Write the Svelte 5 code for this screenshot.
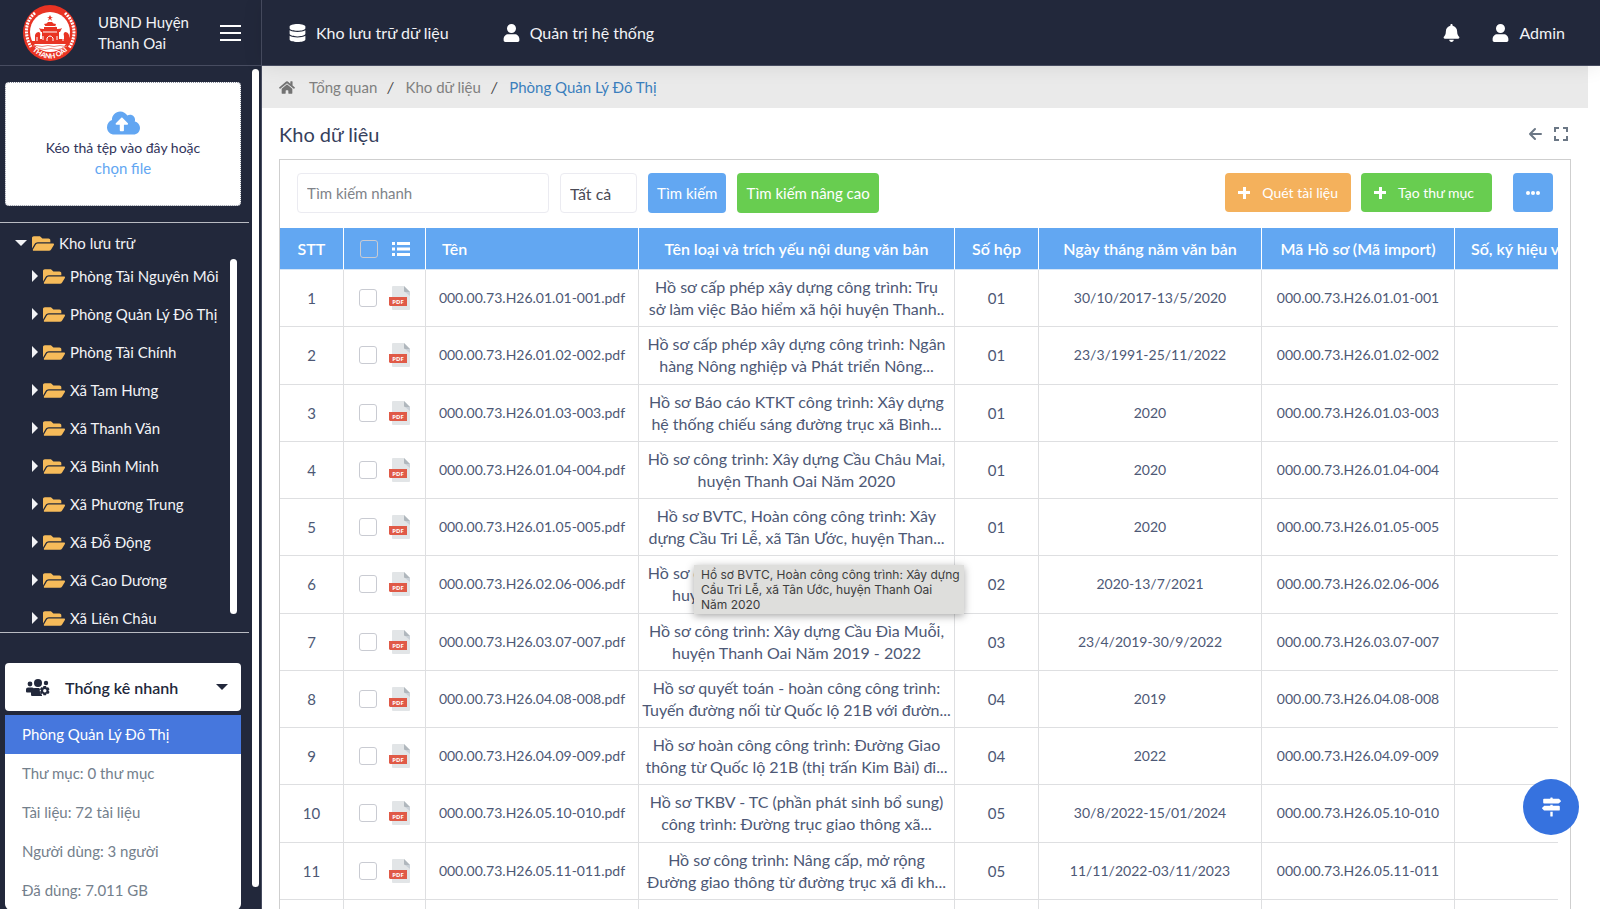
<script lang="ts">
	type Doc = { name: string; lines: [string, string]; box: string; date: string };

	const icons = {
		database:
			'M448 73.143v45.714C448 159.143 347.667 192 224 192S0 159.143 0 118.857V73.143C0 32.857 100.333 0 224 0s224 32.857 224 73.143zM448 176v102.857C448 319.143 347.667 352 224 352S0 319.143 0 278.857V176c48.125 33.143 136.208 48.572 224 48.572S399.874 209.143 448 176zm0 160v102.857C448 479.143 347.667 512 224 512S0 479.143 0 438.857V336c48.125 33.143 136.208 48.572 224 48.572S399.874 369.143 448 336z',
		user: 'M224 256a128 128 0 1 0 0-256 128 128 0 0 0 0 256zm90 32H134C60 288 0 348 0 422v42c0 26 22 48 48 48h352c26 0 48-22 48-48v-42c0-74-60-134-134-134z',
		bell: 'M224 512c35.32 0 63.97-28.65 63.97-64H160.03c0 35.35 28.65 64 63.97 64zm215.39-149.71c-19.32-20.76-55.47-51.99-55.47-154.29 0-77.7-54.48-139.9-127.94-155.16V32c0-17.67-14.32-32-31.98-32s-31.98 14.33-31.98 32v20.84C118.56 68.1 64.08 130.3 64.08 208c0 102.3-36.15 133.53-55.47 154.29-6 6.45-8.66 14.16-8.61 21.71.11 16.4 12.98 32 32.1 32h383.8c19.12 0 32-15.6 32.1-32 .05-7.55-2.61-15.27-8.61-21.71z',
		folder:
			'M572.694 292.093L500.27 416.248A63.997 63.997 0 0 1 444.989 448H45.025c-18.523 0-30.064-20.093-20.731-36.093l72.424-124.155A64 64 0 0 1 152 256h399.964c18.523 0 30.064 20.093 20.73 36.093zM152 224h328v-48c0-26.51-21.49-48-48-48H272l-64-64H48C21.49 64 0 85.49 0 112v278.046l69.077-118.418C86.214 242.25 117.989 224 152 224z',
		upload:
			'M537.6 226.6c4.1-10.7 6.4-22.4 6.4-34.6 0-53-43-96-96-96-19.7 0-38.1 6-53.3 16.2C367 64.2 315.3 32 256 32c-88.4 0-160 71.6-160 160 0 2.7.1 5.4.2 8.1C40.2 219.8 0 273.2 0 336c0 79.5 64.5 144 144 144h368c70.7 0 128-57.3 128-128 0-61.9-44-113.6-102.4-125.4zM393.4 288H328v112c0 8.8-7.2 16-16 16h-48c-8.8 0-16-7.2-16-16V288h-65.4c-14.3 0-21.4-17.2-11.3-27.3l105.4-105.4c6.2-6.2 16.4-6.2 22.6 0l105.4 105.4c10.1 10.1 2.9 27.3-11.3 27.3z',
		home: 'M280.37 148.26L96 300.11V464a16 16 0 0 0 16 16l112.06-.29a16 16 0 0 0 15.92-16V368a16 16 0 0 1 16-16h64a16 16 0 0 1 16 16v95.64a16 16 0 0 0 16 16.05L464 480a16 16 0 0 0 16-16V300L295.67 148.26a12.19 12.19 0 0 0-15.3 0zM571.6 251.47L488 182.56V44.05a12 12 0 0 0-12-12h-56a12 12 0 0 0-12 12v72.61L318.47 43a48 48 0 0 0-61 0L4.34 251.47a12 12 0 0 0-1.6 16.9l25.5 31A12 12 0 0 0 45.15 301l235.22-193.74a12.19 12.19 0 0 1 15.3 0L530.9 301a12 12 0 0 0 16.9-1.6l25.5-31a12 12 0 0 0-1.7-16.93z',
		signs: 'M507.31 84.69L464 41.37c-6-6-14.14-9.37-22.63-9.37H288V16c0-8.84-7.16-16-16-16h-32c-8.84 0-16 7.16-16 16v16H56c-13.25 0-24 10.75-24 24v80c0 13.25 10.75 24 24 24h385.37c8.49 0 16.62-3.37 22.63-9.37l43.31-43.31c6.25-6.26 6.25-16.38 0-22.63zM224 496c0 8.84 7.16 16 16 16h32c8.84 0 16-7.16 16-16V384h-64v112zm232-272H288v-32h-64v32H70.63c-8.49 0-16.62 3.37-22.63 9.37L4.69 276.69c-6.25 6.25-6.25 16.38 0 22.63L48 342.63c6 6 14.14 9.37 22.63 9.37H456c13.25 0 24-10.75 24-24v-80c0-13.25-10.75-24-24-24z'
	};

	const folders = [
		'Phòng Tài Nguyên Môi',
		'Phòng Quản Lý Đô Thị',
		'Phòng Tài Chính',
		'Xã Tam Hưng',
		'Xã Thanh Văn',
		'Xã Bình Minh',
		'Xã Phương Trung',
		'Xã Đỗ Động',
		'Xã Cao Dương',
		'Xã Liên Châu'
	];

	const stats = ['Thư mục: 0 thư mục', 'Tài liệu: 72 tài liệu', 'Người dùng: 3 người', 'Đã dùng: 7.011 GB'];

	const docs: Doc[] = [
		{ name: '000.00.73.H26.01.01-001', lines: ['Hồ sơ cấp phép xây dựng công trình: Trụ', 'sở làm việc Bảo hiểm xã hội huyện Thanh..'], box: '01', date: '30/10/2017-13/5/2020' },
		{ name: '000.00.73.H26.01.02-002', lines: ['Hồ sơ cấp phép xây dựng công trình: Ngân', 'hàng Nông nghiệp và Phát triển Nông...'], box: '01', date: '23/3/1991-25/11/2022' },
		{ name: '000.00.73.H26.01.03-003', lines: ['Hồ sơ Báo cáo KTKT công trình: Xây dựng', 'hệ thống chiếu sáng đường trục xã Bình...'], box: '01', date: '2020' },
		{ name: '000.00.73.H26.01.04-004', lines: ['Hồ sơ công trình: Xây dựng Cầu Châu Mai,', 'huyện Thanh Oai Năm 2020'], box: '01', date: '2020' },
		{ name: '000.00.73.H26.01.05-005', lines: ['Hồ sơ BVTC, Hoàn công công trình: Xây', 'dựng Cầu Tri Lễ, xã Tân Ước, huyện Than...'], box: '01', date: '2020' },
		{ name: '000.00.73.H26.02.06-006', lines: ['Hồ sơ công trình: Xây dựng Cầu Châu Mai,', 'huyện Thanh Oai Năm 2020 - 2021'], box: '02', date: '2020-13/7/2021' },
		{ name: '000.00.73.H26.03.07-007', lines: ['Hồ sơ công trình: Xây dựng Cầu Đìa Muỗi,', 'huyện Thanh Oai Năm 2019 - 2022'], box: '03', date: '23/4/2019-30/9/2022' },
		{ name: '000.00.73.H26.04.08-008', lines: ['Hồ sơ quyết toán - hoàn công công trình:', 'Tuyến đường nối từ Quốc lộ 21B với đườn...'], box: '04', date: '2019' },
		{ name: '000.00.73.H26.04.09-009', lines: ['Hồ sơ hoàn công công trình: Đường Giao', 'thông từ Quốc lộ 21B (thị trấn Kim Bài) đi...'], box: '04', date: '2022' },
		{ name: '000.00.73.H26.05.10-010', lines: ['Hồ sơ TKBV - TC (phần phát sinh bổ sung)', 'công trình: Đường trục giao thông xã...'], box: '05', date: '30/8/2022-15/01/2024' },
		{ name: '000.00.73.H26.05.11-011', lines: ['Hồ sơ công trình: Nâng cấp, mở rộng', 'Đường giao thông từ đường trục xã đi kh...'], box: '05', date: '11/11/2022-03/11/2023' }
	];
</script>

{#snippet icon(name: keyof typeof icons, box: string, cls: string)}
	<svg class={cls} viewBox={box} fill="currentColor" aria-hidden="true"><path d={icons[name]} /></svg>
{/snippet}

<div class="app">
	<aside class="sidebar">
		<div class="brand">
			<svg class="logo" viewBox="0 0 54 56" aria-hidden="true">
				<ellipse cx="27" cy="28" rx="27" ry="28" fill="#e93323" />
				<ellipse cx="27" cy="27" rx="20" ry="20" fill="#fff" />
				<path d="M12 8C2 16 1 30 8 42M42 8c10 9 12 23 4 35" fill="none" stroke="#fff" stroke-width="3" stroke-dasharray="2 1" />
				<path d="M27 10l1 2h2l-2 1 1 3-2-2-2 2 1-3-2-1h2z" fill="#e93323" />
				<path d="M21 19q3 0 4-2h4q1 2 4 2l-1 3h2v2q4 0 5-1l-2 4h-1v7h5v-3q-1-3 1-4 3 0 4 3v7H12v-7q1-3 4-3 2 1 1 4v3h2v-7h-1l-2-4q1 1 5 1v-2h2z" fill="#e93323" />
				<path d="M22 21.500h10M20 27h14M24 36v-3q3-4 6 0v3M20 35v-4M34 35v-4M14 36v-4M40 36v-4" fill="none" stroke="#fff" stroke-width="1" />
				<path d="M8 36h38l-1 3H9z" fill="#e93323" />
				<path d="M10 41q3-1 6 0t6 0 6 0 6 0 6 0 4 0M13 44q3-1 6 0t6 0 6 0 6 0 4 0" fill="none" stroke="#ef8a80" stroke-width="1" />
				<path id="logo-arc" d="M5 41Q27 66 49 41" fill="none" />
				<text class="logo-text" text-anchor="middle"><textPath href="#logo-arc" startOffset="50%">THANH OAI</textPath></text>
			</svg>
			<div class="brand-name">UBND Huyện<br />Thanh Oai</div>
			<button class="burger" aria-label="Menu"><span></span><span></span><span></span></button>
		</div>

		<div class="side-body">
			<div class="side-content">
				<div class="dropzone">
					{@render icon('upload', '0 32 640 448', 'i-upload')}
					<p>Kéo thả tệp vào đây hoặc</p>
					<button>chọn file</button>
				</div>

				<nav class="tree">
					<a class="root" href="#kho">
						<span class="caret-down"></span>
						{@render icon('folder', '0 64 576 384', 'i-folder')}
						Kho lưu trữ
					</a>
					<div class="branch">
						<ul>
							{#each folders as folder}
								<li>
									<a href="#folder">
										<span class="caret-right"></span>
										{@render icon('folder', '0 64 576 384', 'i-folder')}
										<span>{folder}</span>
									</a>
								</li>
							{/each}
						</ul>
						<div class="thumb inner"></div>
					</div>
				</nav>

				<div class="quick">
					<button class="quick-head">
						<svg class="i-group" viewBox="0 0 24 17" fill="currentColor" aria-hidden="true">
							<circle cx="12" cy="4" r="4" />
							<circle cx="4" cy="5" r="2.4" />
							<circle cx="20" cy="4" r="2.2" />
							<path d="M2 8.500h4q1 0 2 1-2 1-3 4H1q-1 0-1-1v-2q0-2 2-2zM9 9h4l1 1q-1 3 2 6v1H6q-1 0-1-1.500V13q0-4 4-4z" />
							<path fill-rule="evenodd" d="M17.500 7h2.500l.5 1.600 1.700-.4L23.600 10.300l-1.200 1.200 1.200 1.500-1.300 2-1.700-.4-.6 1.700h-2.500l-.6-1.700-1.700.4-1.300-2 1.200-1.500-1.200-1.200 1.300-2.100 1.700.4zM18.800 10a1.700 1.700 0 1 0 0 3.400 1.700 1.700 0 0 0 0-3.400z" />
						</svg>
						<span>Thống kê nhanh</span>
						<span class="caret-down"></span>
					</button>
					<ul class="quick-list">
						<li class="active">Phòng Quản Lý Đô Thị</li>
						{#each stats as stat}
							<li>{stat}</li>
						{/each}
					</ul>
				</div>
			</div>
			<div class="thumb outer"></div>
		</div>
	</aside>

	<div class="page">
		<header class="topbar">
			<nav>
				<a href="#kho">{@render icon('database', '0 0 448 512', 'i-nav')}Kho lưu trữ dữ liệu</a>
				<a href="#admin">{@render icon('user', '0 0 448 512', 'i-nav')}Quản trị hệ thống</a>
			</nav>
			<div class="account">
				<button aria-label="Thông báo">{@render icon('bell', '0 0 448 512', 'i-nav')}</button>
				<button>{@render icon('user', '0 0 448 512', 'i-nav')}Admin</button>
			</div>
		</header>

		<main>
			<nav class="crumbs">
				<a href="#home" aria-label="Trang chủ">{@render icon('home', '0 30 576 450', 'i-home')}</a>
				<a href="#overview">Tổng quan</a>
				<i>/</i>
				<a href="#data">Kho dữ liệu</a>
				<i>/</i>
				<a class="current" href="#room">Phòng Quản Lý Đô Thị</a>
			</nav>

			<div class="title">
				<h1>Kho dữ liệu</h1>
				<button aria-label="Quay lại">
					<svg viewBox="0 0 14 14" aria-hidden="true"><path d="M13 7H2M7 2L2 7l5 5" stroke-linecap="round" stroke-linejoin="round" /></svg>
				</button>
				<button aria-label="Toàn màn hình">
					<svg viewBox="0 0 14 14" aria-hidden="true"><path d="M1 5V1h4M9 1h4v4M13 9v4H9M5 13H1V9" /></svg>
				</button>
			</div>

			<section class="panel">
				<div class="tools">
					<input class="search" type="text" placeholder="Tìm kiếm nhanh" aria-label="Tìm kiếm nhanh" />
					<select aria-label="Loại"><option>Tất cả</option></select>
					<button class="btn blue">Tìm kiếm</button>
					<button class="btn green">Tìm kiếm nâng cao</button>
					<div class="actions">
						<button class="btn orange"><span class="plus"></span>Quét tài liệu</button>
						<button class="btn green"><span class="plus"></span>Tạo thư mục</button>
						<button class="btn blue more" aria-label="Thêm"><span></span><span></span><span></span></button>
					</div>
				</div>

				<div class="table-wrap">
					<table>
						<colgroup>
							<col class="c-no" /><col class="c-check" /><col class="c-name" /><col class="c-desc" />
							<col class="c-box" /><col class="c-date" /><col class="c-code" /><col class="c-sign" />
						</colgroup>
						<thead>
							<tr>
								<th>STT</th>
								<th>
									<div class="pick">
										<input type="checkbox" aria-label="Chọn tất cả" />
										<svg class="i-list" viewBox="0 0 18 14" fill="currentColor" aria-hidden="true">
											<path d="M0 0h3v3H0zM5 0h13v3H5zM0 5.500h3v3H0zM5 5.500h13v3H5zM0 11h3v3H0zM5 11h13v3H5z" />
										</svg>
									</div>
								</th>
								<th class="left">Tên</th>
								<th>Tên loại và trích yếu nội dung văn bản</th>
								<th>Số hộp</th>
								<th>Ngày tháng năm văn bản</th>
								<th>Mã Hồ sơ (Mã import)</th>
								<th class="left">Số, ký hiệu văn bản</th>
							</tr>
						</thead>
						<tbody>
							{#each docs as doc, i}
								<tr>
									<td>{i + 1}</td>
									<td>
										<div class="pick">
											<input type="checkbox" aria-label="Chọn {doc.name}" />
											<svg class="i-pdf" viewBox="0 0 21 24" aria-hidden="true">
												<path d="M4 0h11l6 6v17q0 1-1 1H4q-1 0-1-1V1q0-1 1-1z" fill="#e2e5e7" />
												<path d="M15 0l6 6h-5q-1 0-1-1z" fill="#b0b7bd" />
												<path d="M16 6h5v4z" fill="#cad1d8" />
												<path d="M0 11h18v9H1l-1-1z" fill="#e05a47" />
												<text x="9" y="18">PDF</text>
											</svg>
										</div>
									</td>
									<td class="code">{doc.name}.pdf</td>
									<td class="desc">{doc.lines[0]}<br />{doc.lines[1]}</td>
									<td>{doc.box}</td>
									<td class="code">{doc.date}</td>
									<td class="code">{doc.name}</td>
									<td></td>
								</tr>
							{/each}
							<tr><td></td><td></td><td></td><td></td><td></td><td></td><td></td><td></td></tr>
						</tbody>
					</table>
				</div>
			</section>
		</main>
	</div>

	<div class="tooltip" role="tooltip">
		Hồ sơ BVTC, Hoàn công công trình: Xây dựng<br />Cầu Tri Lễ, xã Tân Ước, huyện Thanh Oai<br />Năm 2020
	</div>
	<button class="fab" aria-label="Hướng dẫn">{@render icon('signs', '0 0 512 512', 'i-signs')}</button>
</div>

<style>
	:global(body) {
		margin: 0;
		background: #fff;
	}

	.app {
		display: flex;
		height: 100vh;
		overflow: hidden;
		position: relative;
		font-family: Lato, 'Open Sans', sans-serif;
		font-size: 15px;
		color: #4d5875;
	}

	.app * {
		box-sizing: border-box;
	}

	button {
		font: inherit;
		color: inherit;
		background: none;
		border: 0;
		padding: 0;
		cursor: pointer;
	}

	a {
		color: inherit;
		text-decoration: none;
	}

	ul {
		list-style: none;
		margin: 0;
		padding: 0;
	}

	svg {
		display: block;
		flex: none;
	}

	/* sidebar */
	.sidebar {
		flex: none;
		width: 262px;
		display: flex;
		flex-direction: column;
		background: #22283b;
		color: #f2f3f6;
		border-right: 1px solid #474c60;
	}

	.brand {
		flex: none;
		height: 66px;
		display: flex;
		align-items: center;
		padding: 0 20px 0 23px;
		border-bottom: 1px solid #474c60;
	}

	.logo {
		width: 54px;
		height: 56px;
	}

	.logo-text {
		font: 900 7px Lato, sans-serif;
		fill: #fff;
	}

	.brand-name {
		flex: 1;
		margin-left: 21px;
		line-height: 21px;
	}

	.burger {
		display: flex;
		flex-direction: column;
		gap: 5px;
	}

	.burger span {
		width: 21px;
		height: 2px;
		background: #fff;
	}

	.side-body {
		flex: 1;
		min-height: 0;
		display: flex;
		align-items: flex-start;
		gap: 3px;
	}

	.side-content {
		flex: 1;
	}

	.thumb {
		flex: none;
		border-radius: 4px;
		background: #fff;
	}

	.thumb.outer {
		width: 7px;
		height: 818px;
		margin: 3px 2px 0 0;
	}

	.dropzone {
		height: 124px;
		margin: 16px 8px 16px 5px;
		display: flex;
		flex-direction: column;
		align-items: center;
		justify-content: center;
		border: 1px dotted #8a8f9c;
		border-radius: 4px;
		background: #fff;
		color: #31345a;
	}

	.dropzone p {
		margin: 2px 0 0;
		font-size: 14px;
		line-height: 21px;
	}

	.dropzone button {
		color: #62a6f2;
		font-size: 15px;
		line-height: 20px;
	}

	.i-upload {
		width: 33px;
		height: 24px;
		color: #62a6f2;
	}

	.tree {
		border-top: 1px solid #b9bbc2;
		border-bottom: 1px solid #b9bbc2;
	}

	.tree a {
		display: flex;
		align-items: center;
		gap: 5px;
		white-space: nowrap;
	}

	.tree .root {
		height: 36px;
		padding: 4px 0 0 15px;
	}

	.caret-down {
		border: 6px solid transparent;
		border-top-color: currentColor;
		border-bottom: 0;
	}

	.caret-right {
		border: 6px solid transparent;
		border-left-color: currentColor;
		border-right: 0;
	}

	.i-folder {
		width: 22px;
		height: 15px;
		color: #f6bb5a;
	}

	.branch {
		display: flex;
		height: 373px;
		overflow: hidden;
	}

	.branch ul {
		flex: 1;
		min-width: 0;
		overflow: hidden;
		padding-left: 32px;
	}

	.branch li a {
		height: 38px;
		padding-bottom: 4px;
	}

	.thumb.inner {
		width: 7px;
		height: 355px;
		margin: 0 12px 0 3px;
	}

	.quick {
		margin: 30px 8px 0 5px;
	}

	.quick-head {
		width: 100%;
		height: 48px;
		display: flex;
		align-items: center;
		padding: 0 13px 0 21px;
		border-radius: 4px;
		background: #fff;
		color: #22283b;
		font-size: 16px;
		font-weight: 600;
	}

	.quick-head span:nth-child(2) {
		flex: 1;
		margin-left: 15px;
		text-align: left;
	}

	.i-group {
		width: 24px;
		height: 17px;
	}

	.quick-list {
		margin-top: 4px;
		border-radius: 0 0 6px 6px;
		overflow: hidden;
		background: #fff;
		color: #74808c;
	}

	.quick-list li {
		padding-left: 17px;
		line-height: 39px;
	}

	.quick-list .active {
		background: #4677dd;
		color: #fff;
	}

	/* top bar */
	.page {
		flex: 1;
		min-width: 0;
		display: flex;
		flex-direction: column;
	}

	.topbar {
		flex: none;
		height: 66px;
		display: flex;
		justify-content: space-between;
		align-items: center;
		padding: 0 35px 0 27px;
		background: #22283b;
		border-bottom: 1px solid #474c60;
		color: #f2f3f6;
		font-size: 16px;
		position: relative;
		box-shadow: 0 0 20px rgba(0, 0, 0, 0.09);
	}

	.topbar nav,
	.account {
		display: flex;
		gap: 54px;
	}

	.account {
		gap: 32px;
	}

	.topbar a,
	.topbar button {
		display: flex;
		align-items: center;
		gap: 10px;
	}

	.topbar :global(.i-nav) {
		width: 17px;
		height: 18px;
		color: #fff;
	}

	/* main */
	main {
		flex: 1;
		min-height: 0;
		display: flex;
		flex-direction: column;
		padding-right: 12px;
	}

	.crumbs {
		flex: none;
		height: 42px;
		display: flex;
		align-items: center;
		padding-left: 17px;
		background: #eaeaea;
		color: #808080;
	}

	.crumbs i {
		margin: 0 12px 0 10px;
		color: #444;
	}

	.crumbs a:first-child {
		margin-right: 14px;
	}

	.crumbs .current {
		color: #3b7fbd;
	}

	.i-home {
		width: 16px;
		height: 13px;
		color: #737373;
	}

	.title {
		flex: none;
		height: 51px;
		display: flex;
		align-items: center;
		gap: 12px;
		padding: 0 20px 0 17px;
	}

	.title h1 {
		flex: 1;
		margin: 0;
		font-size: 20px;
		font-weight: 400;
		color: #36405c;
	}

	.title svg {
		width: 14px;
		height: 14px;
		fill: none;
		stroke: #6b7785;
		stroke-width: 2;
	}

	.panel {
		flex: 1;
		min-height: 0;
		display: flex;
		flex-direction: column;
		margin: 0 17px;
		border: 1px solid #cfcfcf;
		border-bottom: 0;
	}

	.tools {
		flex: none;
		display: flex;
		align-items: flex-start;
		gap: 11px;
		padding: 13px 17px 15px;
	}

	.tools input,
	.tools select {
		height: 40px;
		padding: 0 9px;
		border: 1px solid #ebebf1;
		border-radius: 4px;
		background: #fff;
		font: inherit;
		color: #4a4a55;
	}

	.tools select {
		appearance: none;
		width: 77px;
		font-size: 16px;
	}

	.search {
		width: 252px;
	}

	.search::placeholder {
		color: #808389;
	}

	.btn {
		height: 40px;
		padding: 0 9px;
		border-radius: 4px;
		color: #fff;
	}

	.blue {
		background: #62a7f2;
	}

	.green {
		background: #68cd50;
	}

	.orange {
		background: #f4b15c;
	}

	.actions {
		display: flex;
		gap: 10px;
		margin-left: auto;
	}

	.actions .btn {
		display: flex;
		align-items: center;
		height: 39px;
		padding: 0 13px;
		gap: 12px;
		font-size: 14px;
	}

	.actions .green {
		min-width: 131px;
	}

	.actions .more {
		gap: 1px;
		margin-left: 11px;
	}

	.more span {
		width: 4px;
		height: 4px;
		border-radius: 2px;
		background: #fff;
	}

	.plus {
		width: 12px;
		height: 12px;
		background:
			linear-gradient(#fff, #fff) center / 12px 3px no-repeat,
			linear-gradient(#fff, #fff) center / 3px 12px no-repeat;
	}

	.table-wrap {
		flex: 1;
		min-height: 0;
		margin-right: 12px;
		overflow: hidden;
	}

	table {
		table-layout: fixed;
		width: 1415px;
		height: 729px;
		border-collapse: separate;
		border-spacing: 0;
		text-align: center;
	}

	.c-no { width: 64px; }
	.c-check { width: 82px; }
	.c-name { width: 213px; }
	.c-desc { width: 316px; }
	.c-box { width: 84px; }
	.c-date { width: 223px; }
	.c-code { width: 193px; }
	.c-sign { width: 240px; }

	th {
		height: 42px;
		padding: 0;
		background: #62a7f2;
		color: #fff;
		font-size: 16px;
		font-weight: 600;
		white-space: nowrap;
		border-right: 1px solid #fff;
		border-bottom: 1px solid #d5e5f6;
	}

	.left {
		padding: 0 16px;
		text-align: left;
	}

	td {
		height: 57px;
		padding: 0;
		line-height: 22px;
		white-space: nowrap;
		border-right: 1px solid #dedfe1;
		border-bottom: 1px solid #dedfe1;
	}

	.desc {
		font-size: 16px;
	}

	.code {
		font-size: 14px;
	}

	.pick {
		display: flex;
		align-items: center;
		justify-content: center;
		gap: 12px;
	}

	.pick input {
		appearance: none;
		width: 18px;
		height: 18px;
		margin: 0;
		border: 1px solid #c9cbd2;
		border-radius: 3px;
		background: #fff;
	}

	th .pick input {
		background: none;
		margin-right: 2px;
	}

	.i-list {
		width: 18px;
		height: 14px;
	}

	.i-pdf {
		width: 21px;
		height: 24px;
	}

	.i-pdf text {
		font: bold 6px 'Open Sans', sans-serif;
		fill: #fff;
		text-anchor: middle;
	}

	/* floating layers */
	.tooltip {
		position: absolute;
		left: 694px;
		top: 565px;
		width: 270px;
		padding: 2px 7px;
		background: #dededc;
		box-shadow: 0 2px 8px rgba(0, 0, 0, 0.35);
		color: #3c3c3c;
		font: 12px / 15px Inter, sans-serif;
		white-space: nowrap;
	}

	.fab {
		position: absolute;
		right: 21px;
		bottom: 74px;
		width: 56px;
		height: 56px;
		display: flex;
		align-items: center;
		justify-content: center;
		border-radius: 50%;
		background: #3672df;
		color: #fff;
	}

	.i-signs {
		width: 19px;
		height: 20px;
	}
</style>
